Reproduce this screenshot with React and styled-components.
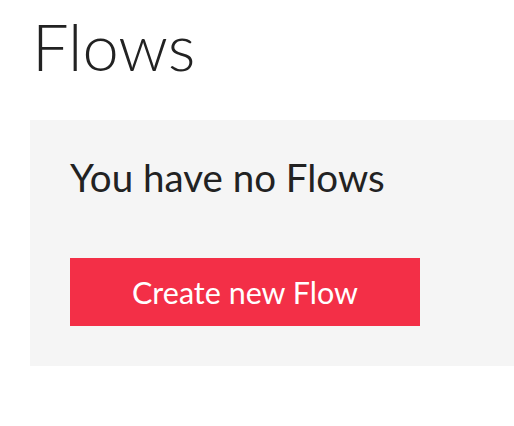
import React from "react";
import styled, { createGlobalStyle } from "styled-components";

const GlobalStyle = createGlobalStyle`
  html, body {
    margin: 0;
    background: #fff;
    font-family: Lato, "Open Sans", sans-serif;
    color: #222;
    overflow: hidden;
  }
`;

const Page = styled.div`
  padding: 0 0 0 30px;
`;

const Title = styled.h1`
  margin: 0;
  padding: 6px 0 0 2px;
  height: 120px;
  box-sizing: border-box;
  font-size: 65px;
  font-weight: 300;
  line-height: 80px;
  color: #222;
`;

const EmptyPanel = styled.section`
  background: #f5f5f5;
  height: 246px;
  box-sizing: border-box;
  padding: 33px 40px 40px;
  display: flex;
  flex-direction: column;
  align-items: flex-start;
`;

const Message = styled.h2`
  margin: 0;
  font-size: 38.5px;
  font-weight: 400;
  line-height: 48px;
  color: #222;
`;

const PrimaryButton = styled.button`
  margin-top: auto;
  width: 350px;
  height: 68px;
  border: 0;
  border-radius: 0;
  background: #f32f47;
  color: #fff;
  font-family: inherit;
  font-size: 30.5px;
  font-weight: 400;
  cursor: pointer;
`;

export default function App() {
  return (
    <>
      <GlobalStyle />
      <Page>
        <Title>Flows</Title>
        <EmptyPanel>
          <Message>You have no Flows</Message>
          <PrimaryButton>Create new Flow</PrimaryButton>
        </EmptyPanel>
      </Page>
    </>
  );
}
